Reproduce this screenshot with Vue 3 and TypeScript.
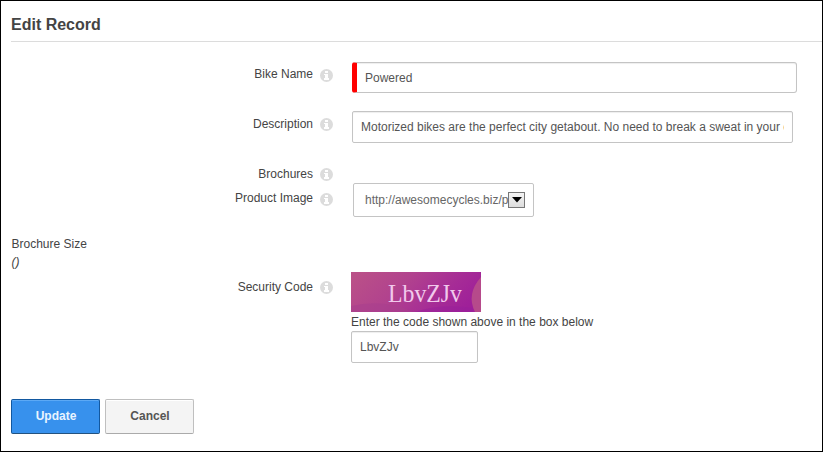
<script setup lang="ts">
import { ref } from 'vue'

interface Field {
  id: string
  label: string
}

const fields: Field[] = [
  { id: 'name', label: 'Bike Name' },
  { id: 'description', label: 'Description' },
  { id: 'brochures', label: 'Brochures' },
  { id: 'image', label: 'Product Image' },
]
const security: Field = { id: 'security', label: 'Security Code' }

const bikeName = ref('Powered')
const description = ref(
  'Motorized bikes are the perfect city getabout. No need to break a sweat in your commute.',
)
const productImage = ref('http://awesomecycles.biz/p')
const code = ref('LbvZJv')
</script>

<template>
  <form class="page" @submit.prevent>
    <h1 class="title">Edit Record</h1>

    <div v-for="f in fields" :key="f.id" class="row" :class="`row-${f.id}`">
      <label class="label" :for="f.id">{{ f.label }}</label>
      <svg class="info" viewBox="0 0 13 13">
        <circle cx="6.5" cy="6.5" r="6.5" fill="#dcdcdc" />
        <path d="M5 2h3v2H5zM4 5h4v4h1v2H4V9h1V6H4z" fill="#fff" />
      </svg>
      <input v-if="f.id === 'name'" :id="f.id" v-model="bikeName" class="input required" type="text" />
      <input v-else-if="f.id === 'description'" :id="f.id" v-model="description" class="input wide" type="text" />
      <div v-else-if="f.id === 'image'" :id="f.id" class="select">
        <span class="select-text">{{ productImage }}</span>
        <span class="select-arrow">
          <svg width="10" height="6" viewBox="0 0 10 6"><path d="M0 0h10L5 5.500z" fill="#000" /></svg>
        </span>
      </div>
    </div>

    <div class="size">
      <div>Brochure Size</div>
      <em>()</em>
    </div>

    <div class="row row-security">
      <label class="label" :for="security.id">{{ security.label }}</label>
      <svg class="info" viewBox="0 0 13 13">
        <circle cx="6.5" cy="6.5" r="6.5" fill="#dcdcdc" />
        <path d="M5 2h3v2H5zM4 5h4v4h1v2H4V9h1V6H4z" fill="#fff" />
      </svg>
      <div class="captcha">
        <svg class="captcha-image" width="130" height="40" viewBox="0 0 130 40">
          <defs>
            <linearGradient id="wash" x1="0" y1="0.2" x2="1" y2="0.5">
              <stop offset="0" stop-color="#ba5088" />
              <stop offset="0.4" stop-color="#b1428e" />
              <stop offset="0.75" stop-color="#a62c96" />
              <stop offset="1" stop-color="#9f2099" />
            </linearGradient>
          </defs>
          <rect width="130" height="40" fill="url(#wash)" />
          <path d="M0 34Q24 28 50 35L62 40H0z" fill="#a8408e" opacity="0.6" />
          <path d="M64 40Q90 31 122 36V40z" fill="#961f9b" opacity="0.45" />
          <path d="M130 5Q115 22 124 40H130z" fill="#b64a8b" />
          <text x="37" y="30" textLength="74" lengthAdjust="spacingAndGlyphs" class="captcha-text">LbvZJv</text>
        </svg>
        <p class="hint">Enter the code shown above in the box below</p>
        <input :id="security.id" v-model="code" class="input code" type="text" />
      </div>
    </div>

    <div class="actions">
      <button class="btn primary" type="submit">Update</button>
      <button class="btn" type="button">Cancel</button>
    </div>
  </form>
</template>

<style>
body {
  background: #fff;
}
</style>

<style scoped>
.page {
  box-sizing: border-box;
  width: 823px;
  height: 452px;
  padding-left: 10px;
  border: 1px solid #000;
  overflow: hidden;
  font: 12px/16px "Liberation Sans", Arial, sans-serif;
  color: #444;
}
.title {
  box-sizing: border-box;
  height: 41px;
  margin: 0 0 20px;
  padding-top: 14px;
  border-bottom: 1px solid #dcdcdc;
  font-size: 16px;
  line-height: 20px;
  font-weight: 700;
}
.row {
  display: grid;
  grid-template-columns: 302px 13px 1fr;
  column-gap: 7px;
  align-items: start;
  height: 49px;
}
.label {
  padding-top: 4px;
  text-align: right;
}
.info {
  width: 13px;
  height: 13px;
  margin-top: 7px;
}
.row-description .label {
  padding-top: 5px;
}
.row-brochures {
  height: 23px;
}
.row-brochures .label {
  padding-top: 6px;
}
.row-brochures .info {
  margin-top: 8px;
}
.row-image {
  height: 52px;
}
.row-image .label {
  padding-top: 7px;
}
.row-image .info {
  margin-top: 10px;
}
.row-security {
  height: 127px;
}
.row-security .label {
  padding-top: 7px;
}
.row-security .info {
  margin-top: 9px;
}
.input {
  box-sizing: border-box;
  height: 32px;
  margin: 0 0 0 12px;
  padding: 0 8px;
  border: 1px solid #c4c4c4;
  border-radius: 2px;
  outline: 0;
  background: #fff;
  box-shadow: inset 0 1px 1px #eee;
  font: inherit;
  color: #555;
}
.required {
  width: 445px;
  height: 31px;
  border-left: 5px solid #f00;
  border-radius: 3px;
}
.wide {
  width: 441px;
}
.select {
  box-sizing: border-box;
  display: flex;
  align-items: center;
  width: 181px;
  height: 34px;
  margin-left: 13px;
  padding: 0 8px 0 11px;
  border: 1px solid #c4c4c4;
  border-radius: 2px;
  color: #666;
}
.select-text {
  width: 143px;
  white-space: nowrap;
}
.select-arrow {
  box-sizing: border-box;
  display: flex;
  flex: none;
  align-items: center;
  justify-content: center;
  width: 17px;
  height: 16px;
  border: 1px solid #777;
  background: linear-gradient(#f4f4f4, #ddd);
}
.size {
  height: 37px;
  padding-left: 0.5px;
  line-height: 18px;
}
.size em {
  display: block;
}
.captcha {
  padding-left: 11px;
}
.captcha-image {
  display: block;
}
.captcha-text {
  font-family: "Liberation Serif", serif;
  font-size: 25px;
  fill: #f1c9ec;
}
.hint {
  height: 19px;
  margin: 0;
  line-height: 20px;
}
.code {
  display: block;
  width: 127px;
  margin: 0;
}
.actions {
  display: flex;
  gap: 5px;
}
.btn {
  box-sizing: border-box;
  width: 89px;
  height: 35px;
  padding: 0 0 2px 1px;
  border: 1px solid #bfbfbf;
  border-bottom-color: #aaa;
  border-radius: 2px;
  background: #f4f4f4;
  box-shadow: inset 0 1px 0 #fff;
  font: bold 12px/16px "Liberation Sans", Arial, sans-serif;
  color: #555;
}
.primary {
  border-color: #1258a0;
  border-bottom-color: #23527f;
  background: #3791ed;
  box-shadow: inset 0 1px 0 #5ca9f5;
  color: #e9f4ff;
}
</style>
